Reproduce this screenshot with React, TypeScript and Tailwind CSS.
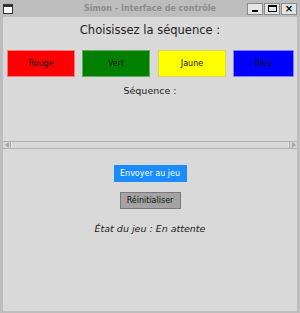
const COLORS = [
  { label: "Rouge", bg: "bg-[#ff0000]", border: "border-[#f08080]", w: "w-[68px]" },
  { label: "Vert", bg: "bg-[#008000]", border: "border-[#66a866]", w: "w-[68px]" },
  { label: "Jaune", bg: "bg-[#ffff00]", border: "border-[#d8d860]", w: "w-[68px]" },
  { label: "Bleu", bg: "bg-[#0000ff]", border: "border-[#8080ff]", w: "w-[61px]" },
];

function TitleButton({ children }: { children: React.ReactNode }) {
  return (
    <div className="flex h-[12px] w-[16px] items-center justify-center border border-[#8a8a8a] bg-[#e4e4e4]">
      {children}
    </div>
  );
}

export default function App() {
  return (
    <div
      className="flex h-[313px] w-[300px] flex-col bg-[#bdbdbd]"
      style={{ fontFamily: '"DejaVu Sans", sans-serif' }}
    >
      <div className="relative flex h-[17px] items-center px-[3px]">
        <div className="h-[10px] w-[10px] border border-[#333] border-t-[3px] bg-white" />
        <div className="absolute inset-x-0 top-[3px] text-center text-[8px] font-bold leading-[11px] text-[#8c8c8c]">
          Simon - Interface de contrôle
        </div>
        <div className="ml-auto flex gap-[1px]">
          <TitleButton>
            <div className="mt-[5px] h-[2px] w-[6px] bg-black" />
          </TitleButton>
          <TitleButton>
            <div className="h-[7px] w-[9px] border border-black border-t-2" />
          </TitleButton>
          <TitleButton>
            <span className="text-[10px] font-bold leading-none text-black">×</span>
          </TitleButton>
        </div>
      </div>
      <div className="mx-[3px] mb-[2px] flex flex-1 flex-col items-center bg-[#d9d9d9]">
        <div className="pt-[5px] text-[11.5px] leading-[16px] text-[#222]">Choisissez la séquence :</div>
        <div className="mt-[12px] flex w-full pl-[4px]">
          {COLORS.map((c, i) => (
            <div
              key={c.label}
              className={`flex h-[27px] items-center justify-center border ${c.bg} ${c.border} ${c.w} ${
                i === 0 ? "" : i === 2 ? "ml-[8px]" : "ml-[7px]"
              } text-[8px] text-[#111]`}
            >
              {c.label}
            </div>
          ))}
        </div>
        <div className="mt-[7px] text-[9.5px] leading-[13px] text-[#222]">Séquence :</div>
        <div className="mt-[44px] flex h-[8px] w-full items-stretch border-y border-[#b0b0b0] bg-[#cfcfcf]">
          <div className="flex w-[8px] items-center justify-center border-r border-[#aaa] bg-[#d6d6d6]">
            <div className="h-0 w-0 border-y-[3px] border-r-[4px] border-y-transparent border-r-[#a8a8a8]" />
          </div>
          <div className="flex-1 border-x border-[#e6e6e6] bg-[#d8d8d8]" />
          <div className="flex w-[8px] items-center justify-center border-l border-[#aaa] bg-[#d6d6d6]">
            <div className="h-0 w-0 border-y-[3px] border-l-[4px] border-y-transparent border-l-[#a8a8a8]" />
          </div>
        </div>
        <div className="mt-[16px] flex h-[17px] w-[73px] items-center justify-center bg-[#1a8cff] text-[8px] text-white">
          Envoyer au jeu
        </div>
        <div className="mt-[10px] flex h-[17px] w-[61px] items-center justify-center border border-[#7a7a7a] bg-[#a3a3a3] text-[8px] text-[#111]">
          Réinitialiser
        </div>
        <div className="mt-[14px] text-[9.5px] italic leading-[12px] text-[#222]">État du jeu : En attente</div>
      </div>
    </div>
  );
}
